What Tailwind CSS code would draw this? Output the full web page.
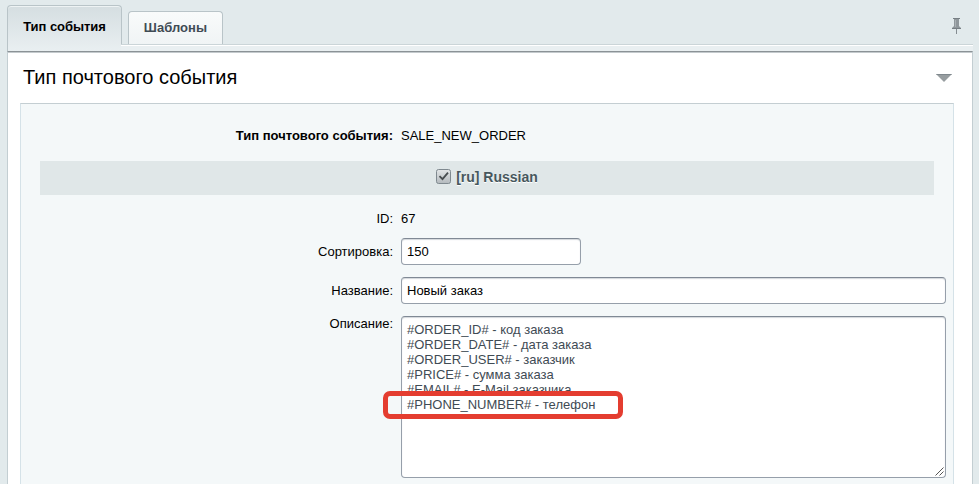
<!DOCTYPE html>
<html lang="ru">
<head>
<meta charset="utf-8">
<title>Тип почтового события</title>
<script src="https://cdn.jsdelivr.net/npm/@tailwindcss/browser@4"></script>
</head>
<body class="h-[484px] overflow-hidden bg-[#e2eaec] font-['Liberation_Sans',Arial,sans-serif] text-[13px] leading-[15px] text-black">
<div class="ml-[7px] flex h-[484px] w-[966px] flex-col">
  <header class="flex h-[51px] shrink-0">
    <div class="mt-[5px] h-[46px] w-[115px] rounded-t-[4px] border border-b-0 border-[#b9c4c8] bg-linear-to-b from-[#d5dee1] to-[#e9eff1] pt-[13px] text-center font-bold shadow-[inset_0_1px_0_#eef3f4]"><span class="tracking-[-0.05px]">Тип события</span></div>
    <div class="flex flex-1 flex-col">
      <div class="flex h-[44px] items-end justify-between pl-[6px]">
        <div class="h-[33px] w-[95px] rounded-t-[4px] border border-b-0 border-[#b9c4c8] bg-linear-to-b from-[#f9fbfb] to-[#f0f4f5] pt-[8px] text-center font-bold text-[#3f4b54]"><span class="tracking-[0.05px]">Шаблоны</span></div>
        <svg class="mr-[12px] mb-[9px]" width="9" height="17" viewBox="0 0 9 17"><path d="M1 0h7v1H7v7l2 2v1H0v-1l2-2V1H1z" fill="#8f979b"/><path d="M1 0h7v1H1zM0 10h9v1H0z" fill="#777f84"/><path d="M3 2h1v7H3z" fill="#aab1b5"/><path d="M4 11h1v5H4z" fill="#858d91"/></svg>
      </div>
      <div class="-ml-[1px] h-[7px] border-t border-[#cbd5d8] bg-[#e9eff1] shadow-[inset_0_1px_0_#fff]"></div>
    </div>
  </header>
  <main class="flex min-h-0 flex-1 flex-col border-x border-t border-x-[#c3ced2] border-t-[#8b9296] bg-white px-[12px] shadow-[inset_0_1px_0_#c4cacd]">
    <div class="flex h-[51px] shrink-0 items-center justify-between pr-[7px] pl-[3px]">
      <h1 class="-mt-[2px] text-[20px] leading-[24px]">Тип почтового события</h1>
      <svg class="mr-[1px]" width="16" height="8" viewBox="0 0 16 8"><path d="M0 0h16L8 8z" fill="#979da0"/><path d="M0 0h16l-1 1H1z" fill="#7f888d"/></svg>
    </div>
    <section class="w-[934px] flex-1 border-x border-t border-x-[#d5e2e8] border-t-[#c4ced2] bg-[#f4f8f9] pr-[7px] pl-[19px]">
      <div class="flex h-[57px] pt-[24px]">
        <div class="w-[353px] text-right font-bold">Тип почтового события:</div>
        <div class="pl-[8px]">SALE_NEW_ORDER</div>
      </div>
      <div class="flex h-[34px] w-[894px] justify-center bg-[#e0e7e8] pt-[8px]">
        <svg class="mr-[5px]" width="15" height="15" viewBox="0 0 15 15"><defs><linearGradient id="cb" x2="0" y2="1"><stop stop-color="#e3e6e7"/><stop offset="1" stop-color="#b3b9bd"/></linearGradient></defs><rect x=".5" y=".5" width="14" height="14" rx="2" fill="url(#cb)" stroke="#7f898f"/><path d="M3.5 7.2l3 3 5.5-6.5" fill="none" stroke="#474c4f" stroke-width="1.8"/></svg>
        <span class="text-[14px] leading-[16px] font-bold text-[#47575d] [text-shadow:0_1px_0_#fff]">[ru] Russian</span>
      </div>
      <div class="flex h-[43px] pt-[16px]">
        <div class="w-[353px] text-right">ID:</div>
        <div class="pl-[8px]">67</div>
      </div>
      <div class="flex h-[39px] gap-[8px]">
        <label class="w-[353px] pt-[6px] text-right">Сортировка:</label>
        <div class="h-[27px] w-[180px] rounded-[4px] border border-[#969faa] border-t-[#808995] bg-white pt-[5px] pl-[5px] shadow-[inset_0_1px_1px_#d3d8dc]">150</div>
      </div>
      <div class="flex h-[39px] gap-[8px]">
        <label class="w-[353px] pt-[6px] text-right">Название:</label>
        <div class="h-[27px] w-[545px] rounded-[4px] border border-[#969faa] border-t-[#808995] bg-white pt-[5px] pl-[5px] shadow-[inset_0_1px_1px_#d3d8dc]">Новый заказ</div>
      </div>
      <div class="flex gap-[8px]">
        <label class="w-[353px] text-right">Описание:</label>
        <div class="relative h-[162px] w-[545px] rounded-[4px] border border-[#969faa] border-t-[#808995] bg-white pt-[5px] pl-[5px] text-[#3f4b54] shadow-[inset_0_1px_1px_#d3d8dc]">
          <p>#ORDER_ID# - код заказа</p>
          <p>#ORDER_DATE# - дата заказа</p>
          <p>#ORDER_USER# - заказчик</p>
          <p>#PRICE# - сумма заказа</p>
          <p>#EMAIL# - E-Mail заказчика</p>
          <p>#PHONE_NUMBER# - телефон</p>
          <div class="absolute top-[74px] -left-[19px] h-[28px] w-[240px] rounded-[7px] border-[5px] border-[#e43d30]"></div>
          <svg class="absolute right-[1px] bottom-[1px]" width="9" height="9" viewBox="0 0 9 9" stroke="#555" fill="none"><path d="M.5 8.5l8-8M4.5 8.5l4-4"/></svg>
        </div>
      </div>
    </section>
  </main>
</div>
</body>
</html>
